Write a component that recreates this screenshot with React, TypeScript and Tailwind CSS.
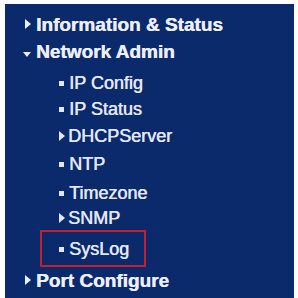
import React from "react";

type Item = {
  label: string;
  kind: "bullet" | "arrow";
  mt: string;
};

const subItems: Item[] = [
  { label: "IP Config", kind: "bullet", mt: "mt-[8px]" },
  { label: "IP Status", kind: "bullet", mt: "mt-[2px]" },
  { label: "DHCPServer", kind: "arrow", mt: "mt-[3px]" },
  { label: "NTP", kind: "bullet", mt: "mt-[4px]" },
  { label: "Timezone", kind: "bullet", mt: "mt-[5px]" },
  { label: "SNMP", kind: "arrow", mt: "mt-[1px]" },
];

function RightArrow({ small }: { small?: boolean }) {
  return small ? (
    <span className="block w-0 h-0 border-l-[6px] border-y-[5px] border-l-[#eceefa] border-y-transparent" />
  ) : (
    <span className="block w-0 h-0 border-l-[6px] border-y-[5px] border-l-[#e4e7f6] border-y-transparent" />
  );
}

function Bullet() {
  return <span className="block w-[5px] h-[5px] bg-[#e4e7f6] ml-[1px]" />;
}

function SubRow({ item }: { item: Item }) {
  return (
    <div className={`flex items-center h-[24px] pl-[53px] ${item.mt}`}>
      {item.kind === "bullet" ? (
        <span className="w-[11px] flex items-center">
          <Bullet />
        </span>
      ) : (
        <span className="w-[10px] flex items-center pl-[1px]">
          <RightArrow />
        </span>
      )}
      <span className="text-[18px] leading-none text-[#e4e7f6] [text-shadow:0.5px_0_0_#e4e7f6]">
        {item.label}
      </span>
    </div>
  );
}

export default function App() {
  return (
    <div className="w-[298px] h-[298px] bg-white overflow-hidden font-['Liberation_Sans',Arial,sans-serif]">
      <div className="mt-[4px] ml-[5px] w-[289px] h-[294px] bg-[#0b2a6c] pt-[8px]">
        {/* Information & Status */}
        <div className="flex items-center h-[24px] pl-[17px]">
          <span className="w-[14px] flex items-center pl-[3px]">
            <RightArrow small />
          </span>
          <span className="text-[19px] leading-none font-bold text-[#eceefa] [text-shadow:0.4px_0_0_#eceefa]">
            Information &amp; Status
          </span>
        </div>

        {/* Network Admin */}
        <div className="flex items-center h-[24px] pl-[17px] mt-[3px]">
          <span className="w-[14px] flex items-center pl-[1px] pt-[6px]">
            <span className="block w-0 h-0 border-t-[5px] border-x-[4.5px] border-t-[#eceefa] border-x-transparent" />
          </span>
          <span className="text-[19px] leading-none font-bold text-[#eceefa] [text-shadow:0.4px_0_0_#eceefa]">
            Network Admin
          </span>
        </div>

        {subItems.map((item) => (
          <SubRow key={item.label} item={item} />
        ))}

        {/* SysLog, highlighted */}
        <div className="ml-[35px] w-[106px] border-2 border-[#c41f30] pt-[5px] pb-[4px] pl-[16px]">
          <div className="flex items-center h-[24px]">
            <span className="w-[11px] flex items-center">
              <Bullet />
            </span>
            <span className="text-[18px] leading-none text-[#e4e7f6] [text-shadow:0.5px_0_0_#e4e7f6]">
              SysLog
            </span>
          </div>
        </div>

        {/* Port Configure */}
        <div className="flex items-center h-[24px] pl-[17px] mt-[1px]">
          <span className="w-[14px] flex items-center pl-[3px]">
            <RightArrow small />
          </span>
          <span className="text-[19px] leading-none font-bold text-[#eceefa] [text-shadow:0.4px_0_0_#eceefa]">
            Port Configure
          </span>
        </div>
      </div>
    </div>
  );
}
